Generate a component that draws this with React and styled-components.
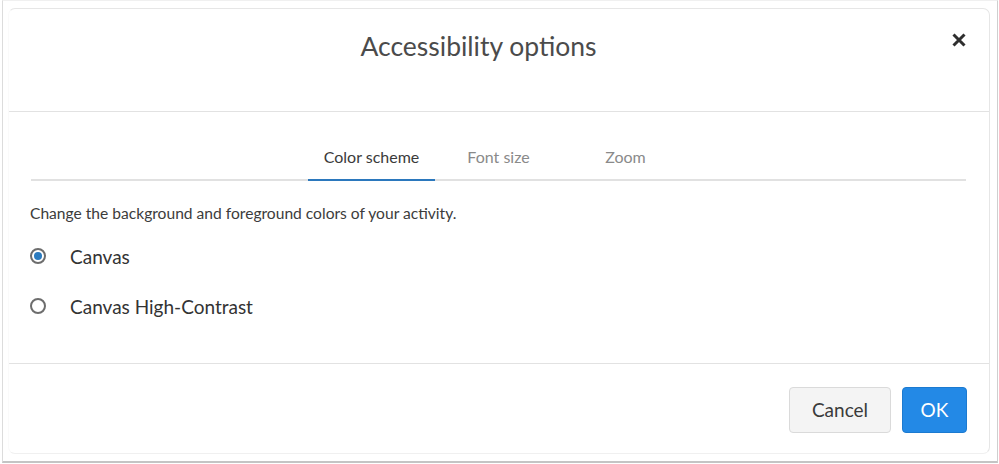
import React, { useState } from "react";
import styled, { createGlobalStyle } from "styled-components";

const Global = createGlobalStyle`
  html, body { margin: 0; padding: 0; background: #ffffff; }
  body { font-family: Lato, "Open Sans", "Liberation Sans", sans-serif; }
  * { box-sizing: border-box; }
`;

const Frame = styled.div`
  margin-left: 2px;
  width: 996px;
  height: 463px;
  border-top: 1px solid #f0f0f0;
  border-left: 1px solid #dcdcdc;
  border-right: 1px solid #cfcfcf;
  border-bottom: 2px solid #c4c4c4;
  padding: 7px 7px 7px 5px;
  display: flex;
`;

const Dialog = styled.div`
  flex: 1;
  display: flex;
  flex-direction: column;
  border: 1px solid #e6e6e6;
  border-left-color: #fafafa;
  border-bottom-color: #f0f0f0;
  border-radius: 7px;
  background: #fff;
`;

const Header = styled.div`
  height: 103px;
  display: flex;
  align-items: flex-start;
  padding-top: 21px;
  border-bottom: 1px solid #e2e2e2;
`;

const Title = styled.h1`
  flex: 1;
  margin: 0;
  text-align: center;
  font-size: 26.5px;
  line-height: 32px;
  font-weight: 400;
  color: #4b4b4b;
`;

const Close = styled.button`
  width: 22px;
  height: 22px;
  margin: -1px 19px 0 0;
  padding: 0;
  border: none;
  background: none;
  display: flex;
  align-items: center;
  justify-content: center;
  cursor: pointer;
`;

const Body = styled.div`
  flex: 1;
  padding: 24px 23px 0 21px;
  border-bottom: 1px solid #e2e2e2;
`;

const TabList = styled.div`
  display: flex;
  justify-content: center;
  border-bottom: 2px solid #e1e1e1;
  margin: 0 0 0 1px;
`;

const Tab = styled.button`
  width: 127px;
  height: 45px;
  padding: 0 0 2px;
  border: none;
  background: none;
  margin-bottom: -2px;
  border-bottom: 2px solid ${(p) => (p.$active ? "#2b78bd" : "transparent")};
  font-family: inherit;
  font-size: 16px;
  color: ${(p) => (p.$active ? "#3a3a3a" : "#8a8a8a")};
  cursor: pointer;
`;

const Description = styled.p`
  margin: 22px 0 0 0;
  font-size: 15.6px;
  line-height: 20px;
  color: #3c3c3c;
`;

const Options = styled.div`
  display: flex;
  flex-direction: column;
  margin-top: 19px;
  gap: 22px;
`;

const Option = styled.label`
  display: flex;
  align-items: center;
  height: 28px;
  font-size: 19px;
  color: #333;
  cursor: pointer;
`;

const RadioCircle = styled.span`
  width: 16px;
  height: 16px;
  border-radius: 50%;
  border: 2px solid #6d6d6d;
  margin: 0 24px 0 0;
  display: flex;
  align-items: center;
  justify-content: center;
  &::after {
    content: "";
    width: 8px;
    height: 8px;
    border-radius: 50%;
    background: ${(p) => (p.$checked ? "#2b7bbf" : "transparent")};
  }
`;

const Footer = styled.div`
  height: 89px;
  display: flex;
  align-items: center;
  justify-content: flex-end;
  gap: 11px;
  padding: 2px 22px 0 0;
`;

const Button = styled.button`
  height: 46px;
  width: ${(p) => (p.$primary ? "65px" : "102px")};
  padding: 0;
  border-radius: 4px;
  font-family: inherit;
  font-size: 19px;
  cursor: pointer;
  border: 1px solid ${(p) => (p.$primary ? "#1c7ad0" : "#dadada")};
  background: ${(p) => (p.$primary ? "#2389e6" : "#f4f4f4")};
  color: ${(p) => (p.$primary ? "#ffffff" : "#3a3a3a")};
`;

export default function App() {
  const [tab, setTab] = useState(0);
  const [scheme, setScheme] = useState("canvas");
  const tabs = ["Color scheme", "Font size", "Zoom"];
  return (
    <>
      <Global />
      <Frame>
        <Dialog>
          <Header>
            <Title>Accessibility options</Title>
            <Close aria-label="Close">
              <svg width="16" height="16" viewBox="0 0 16 16">
                <path d="M2.5 2.5 L13.5 13.5 M13.5 2.5 L2.5 13.5" stroke="#2f2f2f" strokeWidth="3" />
              </svg>
            </Close>
          </Header>
          <Body>
            <TabList>
              {tabs.map((t, i) => (
                <Tab key={t} $active={tab === i} onClick={() => setTab(i)}>
                  {t}
                </Tab>
              ))}
            </TabList>
            <Description>Change the background and foreground colors of your activity.</Description>
            <Options>
              <Option onClick={() => setScheme("canvas")}>
                <RadioCircle $checked={scheme === "canvas"} />
                Canvas
              </Option>
              <Option onClick={() => setScheme("hc")}>
                <RadioCircle $checked={scheme === "hc"} />
                Canvas High-Contrast
              </Option>
            </Options>
          </Body>
          <Footer>
            <Button>Cancel</Button>
            <Button $primary>OK</Button>
          </Footer>
        </Dialog>
      </Frame>
    </>
  );
}
